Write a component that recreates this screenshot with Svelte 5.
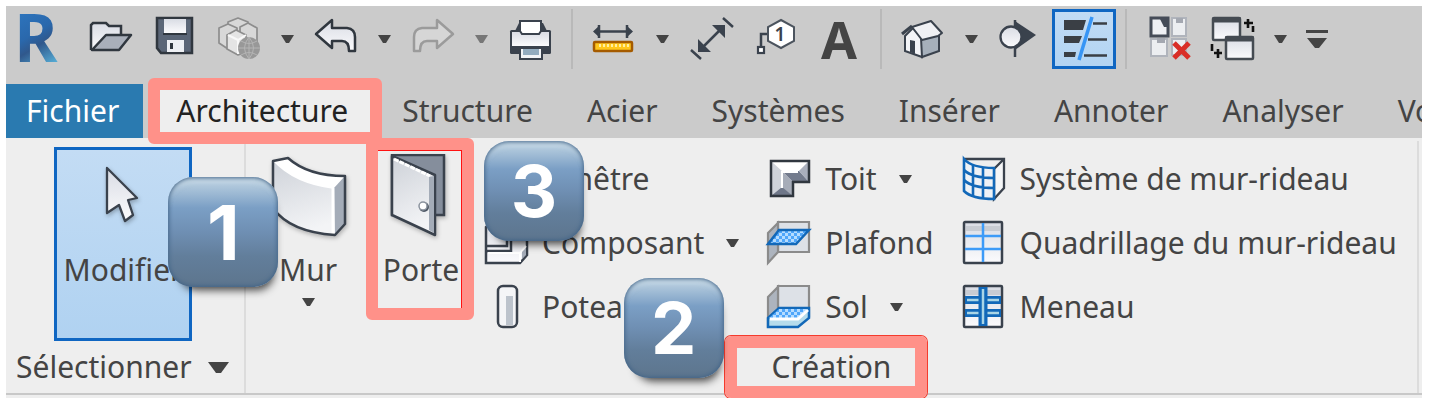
<script>
  const icons = {
    open: `<path d="M2 33V8l2-2h13l3 3h12v8" fill="url(#metal)" stroke="#30373f" stroke-width="2.5"/><path d="M3 33 17 18H42L30 33Z" fill="#a9afba" stroke="#30373f" stroke-width="2.5" stroke-linejoin="round"/>`,
    save: `<path d="M4 1H39V36H8L4 31Z" fill="#5b6677" stroke="#30373f" stroke-width="2.5"/><path d="M11 2H33V16H11Z" fill="url(#metal)"/><path d="M10 17H34" stroke="#30373f" stroke-width="2"/><path d="M14 23H31V35H14Z" fill="#eef0f4"/><path d="M17 26h3v6h-3Z" fill="#30373f"/>`,
    cubes: `<g stroke="#8d8d8d" stroke-width="1.7" stroke-linejoin="round" fill="#d8d8d8"><path d="M11 5 21 1l10 4v18l-10 5-10-5Z"/><path d="M2 11 11 7l9 4v17l-9 4-9-6Z"/><path d="M23 10 31 6l9 5v17H23Z"/><path d="M10 18l9-5 10 5v17l-8 3-11-6Z" fill="#e4e4e4"/></g><path d="M11 18l10 5 8-5M21 23v14" fill="none" stroke="#f8f8f8" stroke-width="2"/><circle cx="32" cy="31" r="11" fill="#989898"/><path d="M21 31h22M32 20v22M24 24q8 5 16 0M24 38q8-5 16 0M32 20q-9 11 0 22M32 20q9 11 0 22" stroke="#b5b5b5" stroke-width="1" fill="none"/>`,
    undo: `<path d="M2 17 18 3V11H33Q41 12 41 20V34H35Q35 24 28 24H18V31Z" fill="url(#metal)" stroke="#30373f" stroke-width="2.5" stroke-linejoin="round"/>`,
    redo: `<path d="M42 17 26 3V11H11Q3 12 3 20V34H9Q9 24 16 24H26V31Z" fill="#d6d6d6" stroke="#9b9b9b" stroke-width="2.5" stroke-linejoin="round"/>`,
    print: `<path d="M7 14 11 6H35l4 8Z" fill="#3a424d"/><rect x="2" y="13" width="41" height="24" rx="1.5" fill="#3a424d"/><path d="M4 15H41V29H4Z" fill="url(#metal)"/><path d="M12 4H33V14L31 17H14L12 14Z" fill="#fff" stroke="#3a424d" stroke-width="2"/><path d="M12 31H34V42H12Z" fill="#f2f4f7" stroke="#3a424d" stroke-width="2"/><path d="M15 32H31V38H15Z" fill="#93acbf"/>`,
    measure: `<path d="M4 14.5H38" stroke="#3a424d" stroke-width="2.5"/><path d="M1 14.5 8 8V21ZM41 14.5 34 8V21Z" fill="#3a424d"/><path d="M7 8V21M35 8V21" stroke="#3a424d" stroke-width="2.5"/><rect x="2" y="25" width="38" height="9" rx="1" fill="#ffc71c" stroke="#a55b00" stroke-width="2.5"/><path d="M8 27v3M12 27v3M16 27v3M20 27v3M24 27v3M28 27v3M32 27v3M36 27v3" stroke="#fff0a0" stroke-width="2"/>`,
    dimension: `<path d="M12 32 33 11M2 33 12 42M34 1 44 10" stroke="#3a424d" stroke-width="2.5"/><path d="M9 35V22L22 35ZM36 8H23L36 21Z" fill="#3a424d"/>`,
    tag: `<path d="M15 17H8V29" fill="none" stroke="#3a424d" stroke-width="2.5"/><path d="M28 3 41 10V24L28 31 15 24V10Z" fill="#fff" stroke="#4c545e" stroke-width="2"/><rect x="5" y="30" width="6" height="6" fill="#fff" stroke="#3a424d" stroke-width="2.2"/><text x="27" y="24" text-anchor="middle" font-family="Noto Sans, sans-serif" font-size="19" font-weight="600" fill="#3a424d">1</text>`,
    home: `<path d="M4 19 12 11 21 21V40L4 34Z" fill="#f3f4f7" stroke="#3a424d" stroke-width="2"/><path d="M20 21 38 17V34L21 40Z" fill="#a6b0bb" stroke="#3a424d" stroke-width="2"/><path d="M11 10 30 4 41 16 37 19 21 23Z" fill="#f0f1f4" stroke="#3a424d" stroke-width="2" stroke-linejoin="round"/><path d="M1 17 11 9" stroke="#3a424d" stroke-width="3"/><path d="M9 23l5 1v13l-5-2Z" fill="#3a424d"/>`,
    section: `<path d="M17 4 38 18 17 33Z" fill="#3a424d"/><path d="M17 3V40" stroke="#3a424d" stroke-width="2.5"/><circle cx="13" cy="20" r="10.5" fill="url(#metal)" stroke="#3a424d" stroke-width="2.3"/>`,
    thin: `<path d="M2 3H24L21 13H2ZM2 19H20L17 26H2ZM2 35H14L13 40H2Z" fill="#3a3f45"/><path d="M31 6.5H45M26 22.5H45M22 38.5H45" stroke="#3a3f45" stroke-width="2.4"/><path d="M30 0 17 43" stroke="#3795f5" stroke-width="3.5"/>`,
    close: `<path d="M5 1H22V19H5Z" fill="#eef0f4" stroke="#454c58" stroke-width="3"/><path d="M14 2h9v8h-5Z" fill="#454c58"/><path d="M26 1H40V19H26ZM5 22H21V39H5ZM26 22H40V38H26Z" fill="#eceef1" stroke="#b0b4bc" stroke-width="2"/><path d="M30 1h7v5h-7ZM11 21h8v5h-8Z" fill="#a4a8b1"/><path d="M28 26 43 41M43 26 28 41" stroke="#d92e27" stroke-width="5"/>`,
    windows: `<rect x="3" y="1" width="27" height="22" rx="1" fill="url(#metal)" stroke="#454b52" stroke-width="2.5"/><path d="M2 3H31" stroke="#454b52" stroke-width="5"/><rect x="16" y="20" width="27" height="22" rx="1" fill="url(#metal)" stroke="#454b52" stroke-width="2.5"/><path d="M15 22H44" stroke="#454b52" stroke-width="5"/><path d="M34 6H43M38 2V11M43 9V15M2 27V34M4 36H12M8 32V41" stroke="#111" stroke-width="2.6"/>`,
    modify: `<path d="M24 14 54 44 45 46 50 61 42 67 36 51 24 59Z" fill="url(#metal)" stroke="#3a424d" stroke-width="2.3" stroke-linejoin="round"/>`,
    wall: `<path d="M5 7 20 4Q40 22 77 22V70L67 81Q22 78 5 54Z" fill="url(#wallface)"/><path d="M5 7 20 4Q40 22 77 22L66 35Q26 30 5 7Z" fill="#fff"/><path d="M66 34 77 22V70L67 80Z" fill="#a4acb8"/><path d="M65 34V80" stroke="#fff" stroke-width="3"/><path d="M5 7 20 4Q40 22 77 22V70L67 81Q22 78 5 54Z" fill="none" stroke="#3a424d" stroke-width="2.5" stroke-linejoin="round"/>`,
    door: `<path d="M11 1H63V61H11Z" fill="#858e9c" stroke="#3a424d" stroke-width="2.5"/><path d="M11 2 54 21V81L11 61Z" fill="url(#wallface)" stroke="#3a424d" stroke-width="2.5" stroke-linejoin="round"/><path d="M13 5 49 22" stroke="#fff" stroke-width="3" stroke-dasharray="5 1"/><path d="M48 23l5-1v57l-5-3Z" fill="#a4acb8"/><circle cx="43" cy="53" r="5" fill="#4e5865"/><circle cx="42" cy="52" r="4" fill="#fff" stroke="#8b939e" stroke-width="1.5"/>`,
    window: `<rect x="4" y="3" width="36" height="38" fill="url(#metal)" stroke="#3a424d" stroke-width="2.5"/><path d="M22 3V41M4 22H40" stroke="#3a424d" stroke-width="2"/>`,
    component: `<path d="M2 42V6L8 1H43V34L36 42Z" fill="url(#metal)" stroke="#3a424d" stroke-width="2.5"/><path d="M3 25H23V6M3 30H27V16" fill="none" stroke="#3a424d" stroke-width="2.5"/><path d="M36 32H4M36 41V32L42 25" fill="none" stroke="#fff" stroke-width="2"/><path d="M38 31 42 27V34L38 38Z" fill="#a4acb8"/>`,
    column: `<rect x="14" y="1" width="19" height="41" rx="5" fill="#f4f5f7" stroke="#3a424d" stroke-width="2.5"/><path d="M22 11h7v29h-7Z" fill="#bcc3cc"/>`,
    roof: `<path d="M4 4H42V25H26V39H4Z" fill="#e2e4ea"/><path d="M4 4 15 14V30L4 39Z" fill="#cfd3da"/><path d="M4 4H42L32 14H15Z" fill="#fff"/><path d="M15 14H32L42 25H26Z" fill="#737b8d"/><path d="M32 14 42 4V25Z" fill="#a9afbd"/><path d="M15 14 26 25V39L15 31Z" fill="#a6acb8"/><path d="M4 39 15 30 26 39Z" fill="#6f7789"/><path d="M15 31V15H31" fill="none" stroke="#fff" stroke-width="2"/><path d="M4 4H42V25H26V39H4Z" fill="none" stroke="#30373f" stroke-width="2.5"/>`,
    ceiling: `<path d="M11 1H42V31H11Z" fill="#dde1e7" stroke="#8b8b8b" stroke-width="2.2"/><path d="M1 12 11 2V31L1 42Z" fill="#adb4be" stroke="#8b8b8b" stroke-width="2.2"/><path d="M12 9H42L29 23H1Z" fill="url(#tiles)" stroke="#1268b8" stroke-width="2.5"/>`,
    floor: `<path d="M11 1H42V31H11Z" fill="#dde1e7" stroke="#8b8b8b" stroke-width="2.2"/><path d="M1 12 11 2V31L1 40Z" fill="#adb4be" stroke="#8b8b8b" stroke-width="2.2"/><path d="M1 33 12 23H42V33L31 42H1Z" fill="#b5dcec" stroke="#1268b8" stroke-width="2.5"/><path d="M12 24H41L31 33H2Z" fill="url(#tiles)"/><path d="M3 34H31L41 25" fill="none" stroke="#fff" stroke-width="3"/>`,
    curtain: `<path d="M2 2H42V31L32 42V12L42 2" fill="#f5f6f7" stroke="#3a424d" stroke-width="2.3"/><path d="M2 2Q10 11 32 11V42Q10 42 2 34Z" fill="#eef2f6" stroke="#1268b8" stroke-width="2.6"/><path d="M11 8V40M21 11V42M2 13Q10 21 32 21M2 23Q10 31 32 31" fill="none" stroke="#1268b8" stroke-width="2.6"/>`,
    grid: `<rect x="2" y="1" width="38" height="41" rx="1" fill="url(#metal)" stroke="#3a424d" stroke-width="2.5"/><path d="M4 5H38V10H4Z" fill="#c8ccd3"/><path d="M21 2V41M3 15H39M3 28H39" stroke="#3d9bf8" stroke-width="2.5"/>`,
    mullion: `<rect x="2" y="1" width="38" height="41" rx="1" fill="url(#metal)" stroke="#3a424d" stroke-width="2.5"/><path d="M4 5H38V10H4Z" fill="#c8ccd3"/><path d="M3 15H39M3 28H39" stroke="#1268b8" stroke-width="8"/><path d="M5 15H37M5 28H37" stroke="#a9d5e6" stroke-width="2.5"/><path d="M21 2V41" stroke="#1268b8" stroke-width="9"/><path d="M21 4V39" stroke="#a9d5e6" stroke-width="2.5"/>`
  };

  const quick = [
    ['open', 'Ouvrir'], ['save', 'Enregistrer'], ['cubes', 'Synchroniser'], ['caret'],
    ['undo', 'Annuler'], ['caret'], ['redo', 'Rétablir'], ['caret', '', 'dim'], ['print', 'Imprimer'], ['sep'],
    ['measure', 'Mesurer'], ['caret'], ['dimension', 'Cote alignée'], ['tag', 'Étiquette'], ['letter', 'Texte'], ['sep'],
    ['home', 'Vue 3D'], ['caret'], ['section', 'Coupe'], ['thin', 'Lignes fines', 'on'], ['sep'],
    ['close', 'Fermer les vues masquées'], ['windows', 'Changer de fenêtre'], ['caret'], ['custom', 'Personnaliser']
  ];

  const tabs = ['Architecture', 'Structure', 'Acier', 'Systèmes', 'Insérer', 'Annoter', 'Analyser', 'Vo'];

  const columns = [
    [['window', 'Fenêtre'], ['component', 'Composant', true], ['column', 'Poteau']],
    [['roof', 'Toit', true], ['ceiling', 'Plafond'], ['floor', 'Sol', true]],
    [['curtain', 'Système de mur-rideau'], ['grid', 'Quadrillage du mur-rideau'], ['mullion', 'Meneau']]
  ];
</script>

{#snippet icon(name)}
  <svg class="icon" viewBox="0 0 44 44" aria-hidden="true">{@html icons[name]}</svg>
{/snippet}

{#snippet bigIcon(name)}
  <svg class="big-icon" viewBox="0 0 80 84" aria-hidden="true">{@html icons[name]}</svg>
{/snippet}

{#snippet caret()}
  <svg class="caret" viewBox="0 0 13 8" aria-hidden="true"><path d="M0 0H13L8 8H5Z" fill="currentColor" /></svg>
{/snippet}

<svg class="defs" aria-hidden="true">
  <defs>
    <linearGradient id="metal" x1="0" y1="0" x2="0" y2="1">
      <stop offset="0" stop-color="#d9dce4" /><stop offset="1" stop-color="#fbfbfd" />
    </linearGradient>
    <linearGradient id="wallface" x1="0" y1="0" x2="0.3" y2="1">
      <stop offset="0" stop-color="#cdd1d8" /><stop offset="1" stop-color="#f3f4f6" />
    </linearGradient>
    <linearGradient id="brand" x1="0.2" y1="0" x2="0.5" y2="1">
      <stop offset="0" stop-color="#2f7cc8" /><stop offset="0.5" stop-color="#2a68ac" />
      <stop offset="0.65" stop-color="#30588c" /><stop offset="1" stop-color="#5fc0e6" />
    </linearGradient>
    <pattern id="tiles" width="6" height="6" patternUnits="userSpaceOnUse">
      <path d="M0 0H6V6H0Z" fill="#4fa6fa" /><path d="M0 0h3v3H0ZM3 3h3v3H3Z" fill="#b5dcff" />
    </pattern>
  </defs>
</svg>

<div class="window">
  <header class="quick">
    <button class="brand" aria-label="Menu Revit">
      <svg viewBox="0 0 44 52" aria-hidden="true"><text x="22" y="49" text-anchor="middle" class="logo">R</text></svg>
    </button>
    {#each quick as [name, label, state]}
      {#if name === 'sep'}
        <span class="sep"></span>
      {:else if name === 'caret'}
        <button class="drop {state ?? ''}" aria-label="Plus d'options">{@render caret()}</button>
      {:else if name === 'letter'}
        <button class="tool letter" title={label}>A</button>
      {:else if name === 'custom'}
        <button class="custom" aria-label={label}>
          <svg viewBox="0 0 22 18" aria-hidden="true"><path d="M0 0H22V3H0ZM1 8H21L13 18H9Z" fill="#444" /></svg>
        </button>
      {:else}
        <button class="tool {state ?? ''}" aria-label={label}>{@render icon(name)}</button>
      {/if}
    {/each}
  </header>

  <nav class="tabs">
    <button class="tab file">Fichier</button>
    {#each tabs as tab, i}
      <button class="tab" class:active={i === 0}>
        {tab}
        {#if i === 0}
          <span class="frame frame-tab"></span>
          <span class="key key-one">1</span>
        {/if}
      </button>
    {/each}
  </nav>

  <main class="ribbon">
    <section class="panel select">
      <div class="body">
        <button class="big modify">{@render bigIcon('modify')}<span>Modifier</span></button>
      </div>
      <h2>Sélectionner
        <svg class="title-caret" viewBox="0 0 21 11" aria-hidden="true"><path d="M0 0H21L13 11H8Z" fill="currentColor" /></svg>
      </h2>
    </section>

    <section class="panel build">
      <div class="body">
        <button class="big">{@render bigIcon('wall')}<span>Mur</span>{@render caret()}</button>
        <button class="big door">
          {@render bigIcon('door')}<span>Porte</span>
          <span class="frame frame-door"></span>
          <span class="key key-three">3</span>
        </button>
        <div class="columns">
          {#each columns as column}
            <div class="column">
              {#each column as [name, label, menu]}
                <button class="row">
                  {@render icon(name)}<span>{label}</span>{#if menu}{@render caret()}{/if}
                </button>
              {/each}
            </div>
          {/each}
        </div>
      </div>
      <h2>
        <span class="title">Création
          <span class="frame frame-title"></span>
          <span class="key key-two">2</span>
        </span>
      </h2>
    </section>
  </main>
</div>

<style>
  :global(body) {
    margin: 0;
    background: #fff;
  }
  .defs {
    position: absolute;
    width: 0;
    height: 0;
  }
  .window {
    margin: 6px 8px 0 6px;
    padding-bottom: 3px;
    overflow-x: clip;
    background: #eee;
    color: #444;
    font-family: 'Noto Sans', 'Open Sans', sans-serif;
    font-size: 30px;
    line-height: 44px;
  }
  button {
    flex: none;
    margin: 0;
    padding: 0;
    border: 0;
    background: none;
    color: inherit;
    font: inherit;
    white-space: nowrap;
  }
  svg {
    display: block;
    flex: none;
  }
  .icon {
    width: 44px;
    height: 44px;
    overflow: visible;
  }
  .big-icon {
    width: 80px;
    height: 84px;
    filter: drop-shadow(1px 2px 2px #0004);
  }
  .caret {
    width: 13px;
    height: 8px;
  }

  .quick {
    display: flex;
    padding: 3px 0 15px;
    background: #cbcbcb;
  }
  .quick button {
    display: flex;
    align-items: center;
    justify-content: center;
    height: 60px;
  }
  .quick .brand {
    width: 60px;
    margin-right: 13px;
  }
  .brand svg {
    width: 44px;
    height: 52px;
    overflow: visible;
  }
  .logo {
    fill: url(#brand);
    font-size: 66px;
    font-weight: 700;
  }
  .quick .tool {
    width: 64px;
  }
  .quick .drop {
    width: 33px;
  }
  .quick .dim {
    color: #777;
  }
  .quick .letter {
    font-size: 52px;
    font-weight: 700;
  }
  .quick .on {
    border: 3px solid #0f66c2;
    background: linear-gradient(#c1dbf4, #b2d4f3);
  }
  .quick .custom {
    width: 40px;
  }
  .custom svg {
    width: 22px;
    height: 18px;
  }
  .sep {
    flex: none;
    width: 2px;
    margin: 0 9px;
    background: #b9b9b9;
  }

  .tabs {
    display: flex;
    background: #cbcbcb;
  }
  .tab {
    position: relative;
    height: 54px;
    padding: 0 27px;
  }
  .tab.file {
    margin-right: 6px;
    padding: 0 24px 0 20px;
    background: #2a7ab0;
    color: #fff;
  }
  .tab.active {
    background: #eee;
    color: #222;
  }

  .ribbon {
    display: flex;
    border-bottom: 2px solid #c8c8c8;
    padding-top: 3px;
  }
  .panel {
    border-right: 2px solid #dcdcdc;
  }
  .select {
    flex: none;
    width: 238px;
  }
  .build {
    flex: 1;
    margin-right: 3px;
  }
  .body {
    display: flex;
    padding-top: 6px;
  }
  .big {
    position: relative;
    display: flex;
    flex-direction: column;
    align-items: center;
    width: 124px;
    height: 194px;
    padding-top: 7px;
  }
  .big > span:not(.frame):not(.key) {
    margin-top: 10px;
  }
  .big .caret {
    margin-top: 6px;
  }
  .modify {
    width: 138px;
    margin-left: 48px;
    padding-top: 4px;
    border: 3px solid #0f66c2;
    background: linear-gradient(#c3dcf4, #b0d2f1);
  }
  .door {
    width: 102px;
  }
  .columns {
    display: flex;
    gap: 28px;
    margin-left: 12px;
  }
  .column {
    display: flex;
    flex-direction: column;
  }
  .row {
    display: flex;
    align-items: center;
    height: 64px;
  }
  .row span {
    margin-left: 14px;
  }
  .row .caret {
    margin-left: 22px;
  }
  h2 {
    display: flex;
    align-items: center;
    justify-content: center;
    margin: 0;
    height: 52px;
    font-size: 30px;
    font-weight: 400;
  }
  .select h2 {
    justify-content: flex-start;
    padding-left: 10px;
  }
  .title-caret {
    width: 21px;
    height: 11px;
    margin-left: 16px;
  }
  .title {
    position: relative;
  }

  .frame {
    position: absolute;
    z-index: 1;
    box-sizing: border-box;
    border: 12px solid #ff9189;
    border-radius: 6px;
    pointer-events: none;
  }
  .frame-tab {
    inset: -6px -7px -6px -1px;
  }
  .frame-door {
    inset: -9px -2px 21px -4px;
    box-shadow: inset -1px 1px #f11;
  }
  .frame-door::after {
    content: '';
    position: absolute;
    inset: 0;
    border-top: 1px solid #f11;
    border-right: 1px solid #f11;
  }
  .frame-title {
    inset: -9px -36px -9px -47px;
    box-shadow: 0 0 0 1px #f43b2d;
  }
  .key {
    position: absolute;
    z-index: 2;
    box-sizing: border-box;
    width: 100px;
    height: 100px;
    border-radius: 25px;
    background: linear-gradient(#b9cfe0 4%, #7b9fc5 28%, #6f8fb3 50%, #627e9b 72%, #5d758d);
    box-shadow:
      inset 0 0 4px 1px #416387,
      inset 0 7px 5px -2px #d4e2ec88,
      4px 11px 8px -8px #000b;
    color: #fff;
    font-family: Inter, 'Liberation Sans', sans-serif;
    font-size: 72px;
    font-weight: 700;
    line-height: 100px;
    text-align: center;
  }
  .key-one {
    top: 93px;
    left: 19px;
    width: 110px;
    height: 110px;
    font-size: 76px;
    line-height: 110px;
  }
  .key-three {
    top: -6px;
    left: 114px;
  }
  .key-two {
    top: -67px;
    left: -148px;
  }
</style>
